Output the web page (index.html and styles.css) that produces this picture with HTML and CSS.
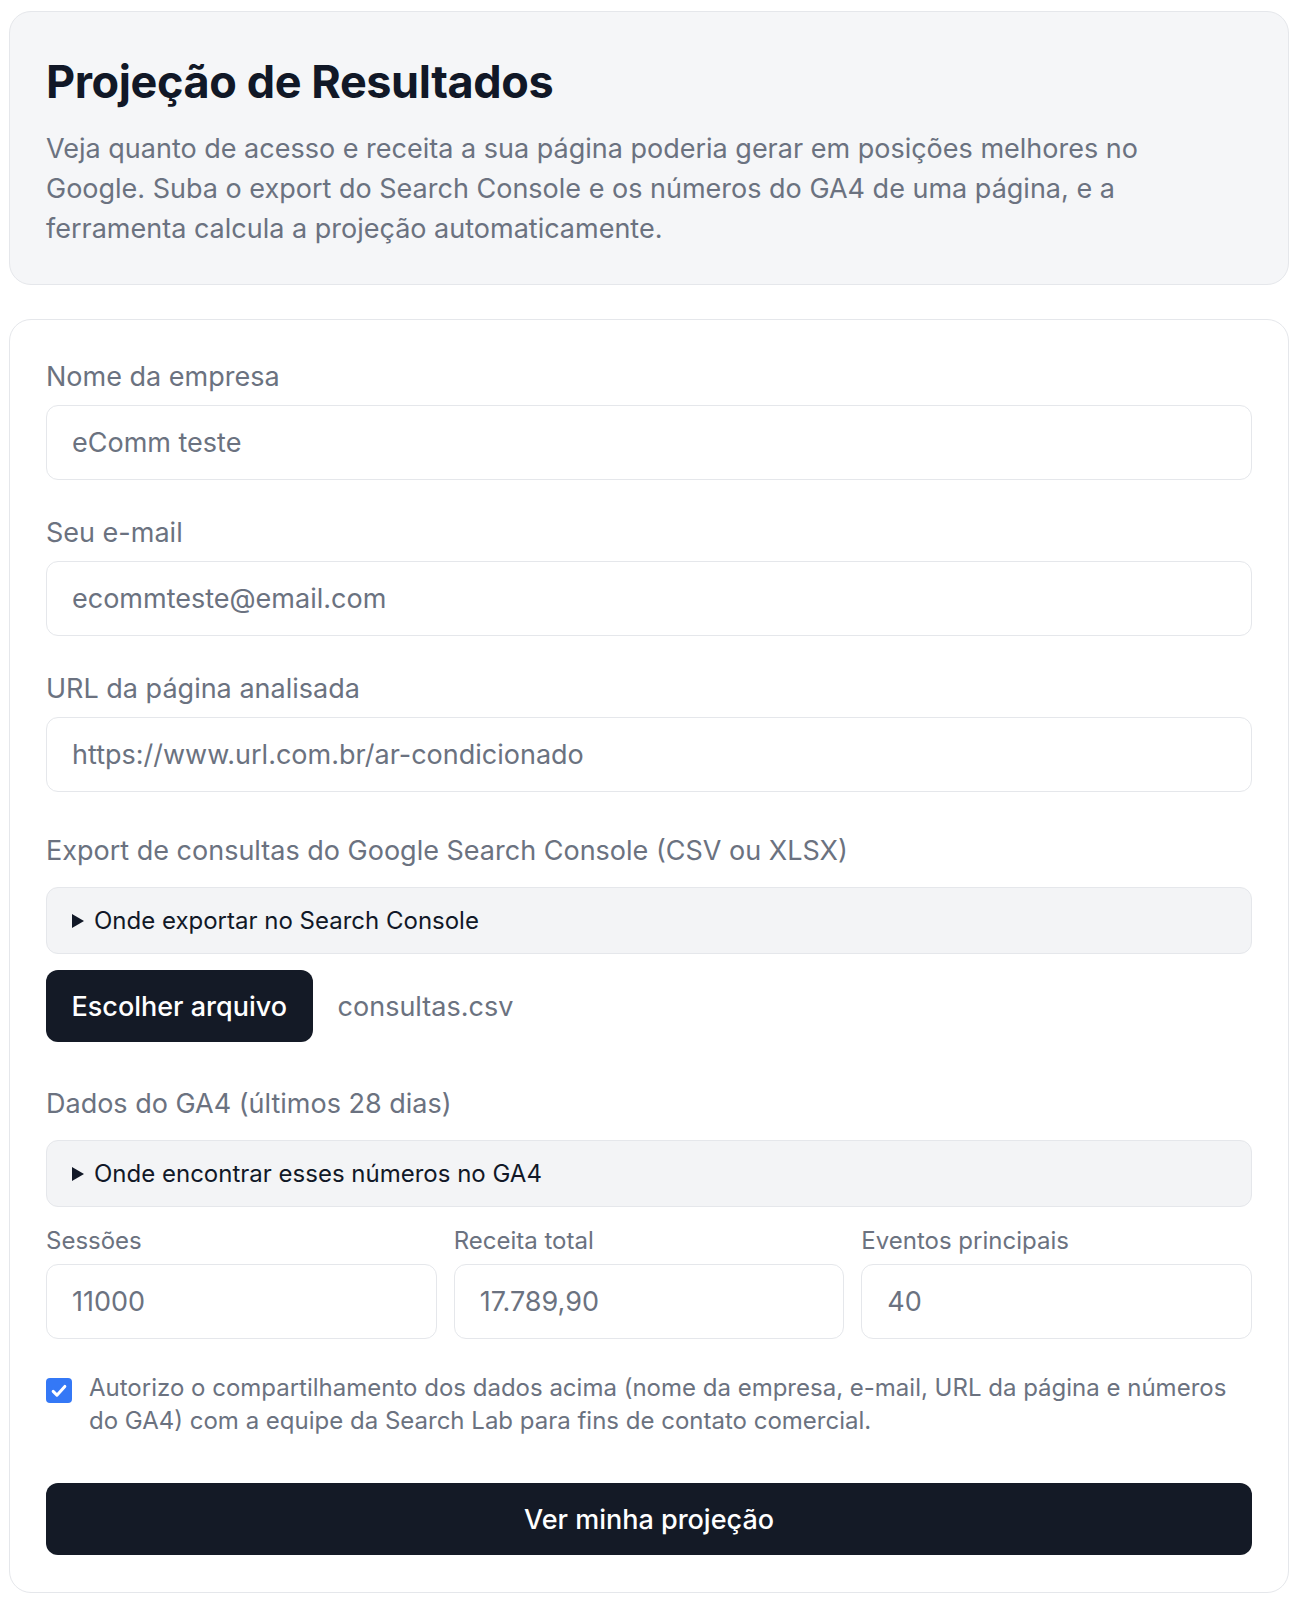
FILE: index.html
```html
<!DOCTYPE html>
<html lang="pt-BR">
<head>
<meta charset="utf-8">
<title>Projeção de Resultados</title>
<link rel="stylesheet" href="styles.css">
</head>
<body>
<main class="page">
  <section class="intro">
    <h1 class="intro-title">Projeção de Resultados</h1>
    <p class="intro-text">Veja quanto de acesso e receita a sua página poderia gerar em posições melhores no Google. Suba o export do Search Console e os números do GA4 de uma página, e a ferramenta calcula a projeção automaticamente.</p>
  </section>

  <form class="form-card">
    <div class="field">
      <label class="label">Nome da empresa</label>
      <div class="input">eComm teste</div>
    </div>
    <div class="field">
      <label class="label">Seu e-mail</label>
      <div class="input">ecommteste@email.com</div>
    </div>
    <div class="field">
      <label class="label">URL da página analisada</label>
      <div class="input">https://www.url.com.br/ar-condicionado</div>
    </div>
    <div class="field field-upload">
      <label class="label">Export de consultas do Google Search Console (CSV ou XLSX)</label>
      <div class="details"><span class="tri"></span>Onde exportar no Search Console</div>
      <div class="file-row">
        <span class="file-btn">Escolher arquivo</span>
        <span class="file-name">consultas.csv</span>
      </div>
    </div>
    <div class="field field-ga">
      <label class="label">Dados do GA4 (últimos 28 dias)</label>
      <div class="details"><span class="tri"></span>Onde encontrar esses números no GA4</div>
      <div class="ga-grid">
        <div class="ga-col">
          <span class="sublabel">Sessões</span>
          <div class="input">11000</div>
        </div>
        <div class="ga-col">
          <span class="sublabel">Receita total</span>
          <div class="input">17.789,90</div>
        </div>
        <div class="ga-col">
          <span class="sublabel">Eventos principais</span>
          <div class="input">40</div>
        </div>
      </div>
    </div>
    <div class="consent">
      <span class="checkbox"><svg viewBox="0 0 24 24" width="20" height="20"><path d="M5 12.5l4.5 4.5L19 6.5" fill="none" stroke="#fff" stroke-width="3.6" stroke-linecap="round" stroke-linejoin="round"/></svg></span>
      <span class="consent-text">Autorizo o compartilhamento dos dados acima (nome da empresa, e-mail, URL da página e números do GA4) com a equipe da Search Lab para fins de contato comercial.</span>
    </div>
    <div class="submit">Ver minha projeção</div>
  </form>
</main>
</body>
</html>
```

FILE: styles.css
```css
* { box-sizing: border-box; }
html, body { margin: 0; padding: 0; background: #ffffff; }
body {
  font-family: Inter, "Noto Sans", "Liberation Sans", sans-serif;
  color: #111827;
}
.page {
  padding: 11px 5px 14px 9px;
  display: flex;
  flex-direction: column;
  gap: 34px;
}
.intro {
  background: #f5f6f8;
  border: 1.5px solid #e5e7eb;
  border-radius: 22px;
  padding: 42px 36px 35px 36px;
}
.intro-title {
  margin: 0;
  font-size: 45px;
  line-height: 56px;
  font-weight: 650;
  color: #111827;
  letter-spacing: -0.4px;
}
.intro-text {
  margin: 19px 0 0 0;
  max-width: 1110px;
  font-size: 27px;
  line-height: 40px;
  color: #6b7280;
}
.form-card {
  border: 1.5px solid #e5e7eb;
  border-radius: 22px;
  padding: 39px 36px 37px 36px;
  display: flex;
  flex-direction: column;
}
.field {
  display: flex;
  flex-direction: column;
  margin-bottom: 35px;
}
.label {
  font-size: 27px;
  line-height: 36px;
  color: #6b7280;
  margin-bottom: 10px;
}
.input {
  height: 75px;
  border: 1.5px solid #e5e7eb;
  border-radius: 12px;
  padding: 0 25px;
  display: flex;
  align-items: center;
  font-size: 27px;
  color: #6b7280;
  background: #fff;
}
.details {
  height: 67px;
  background: #f3f4f6;
  border: 1.5px solid #e5e7eb;
  border-radius: 12px;
  padding: 0 24px 0 25px;
  display: flex;
  align-items: center;
  font-size: 24px;
  color: #111827;
  margin-top: 8px;
}
.tri {
  flex: none;
  width: 0;
  height: 0;
  border-left: 12px solid #111827;
  border-top: 7.5px solid transparent;
  border-bottom: 7.5px solid transparent;
  margin-right: 10px;
}
.file-row {
  display: flex;
  align-items: center;
  gap: 25px;
  margin-top: 16px;
}
.file-btn {
  background: #141a26;
  color: #fff;
  border-radius: 12px;
  height: 72px;
  padding: 0 25.5px;
  display: inline-flex;
  align-items: center;
  font-size: 27px;
  font-weight: 500;
}
.file-name {
  font-size: 27px;
  color: #6b7280;
}
.field-upload { margin-top: 6px; margin-bottom: 44px; }
.ga-grid {
  display: grid;
  grid-template-columns: 1fr 1fr 1fr;
  gap: 17px;
  margin-top: 18px;
}
.ga-col {
  display: flex;
  flex-direction: column;
}
.sublabel {
  font-size: 24px;
  line-height: 32px;
  color: #6b7280;
  margin-bottom: 7px;
}
.field-ga { margin-bottom: 33px; }
.consent {
  display: flex;
  gap: 17px;
  align-items: flex-start;
}
.checkbox {
  flex: none;
  width: 26px;
  height: 25px;
  margin-top: 6px;
  border-radius: 4px;
  background: #3478f6;
  display: flex;
  align-items: center;
  justify-content: center;
}
.consent-text {
  font-size: 24px;
  line-height: 32.5px;
  color: #6b7280;
}
.submit {
  margin-top: 46px;
  height: 72px;
  background: #141a26;
  border-radius: 12px;
  color: #fff;
  font-size: 27px;
  font-weight: 500;
  display: flex;
  align-items: center;
  justify-content: center;
}
```
